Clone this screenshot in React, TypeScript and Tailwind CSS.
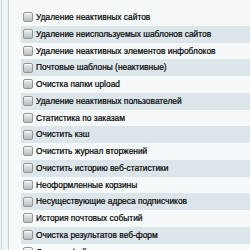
const TASKS = [
  "Удаление неактивных сайтов",
  "Удаление неиспользуемых шаблонов сайтов",
  "Удаление неактивных элементов инфоблоков",
  "Почтовые шаблоны (неактивные)",
  "Очистка папки upload",
  "Удаление неактивных пользователей",
  "Статистика по заказам",
  "Очистить кэш",
  "Очистить журнал вторжений",
  "Очистить историю веб-статистики",
  "Неоформленные корзины",
  "Несуществующие адреса подписчиков",
  "История почтовых событий",
  "Очистка результатов веб-форм",
  "Очистка файлов логов",
];

function Checkbox() {
  return (
    <span className="w-[10px] h-[10px] shrink-0 rounded-[2px] border border-[#8e9699] bg-gradient-to-b from-[#eeeeee] to-[#b9bdbf] shadow-[inset_0_1px_0_#fafafa]" />
  );
}

export default function App() {
  return (
    <div className="flex w-[250px] h-[250px] overflow-hidden bg-[#f5f9f9] font-['Liberation_Sans',Arial,sans-serif]">
      {/* left frame strip */}
      <div className="w-[9px] shrink-0 flex bg-[#eef4f5] border-r border-[#c8d2d5]">
        <div className="w-px ml-px bg-[#bcd3da]" />
      </div>

      <div className="flex-1 pl-[12px] pt-[9px]">
        {TASKS.map((label, i) => (
          <div
            key={label}
            className={`h-[16.75px] flex items-center gap-[3px] pl-[2px] ${
              i % 2 === 1 ? "bg-[#dce5e9]" : "bg-[#f5f9f9]"
            }`}
          >
            <Checkbox />
            <span className="text-[8.4px] leading-none text-black whitespace-nowrap [-webkit-text-stroke:0.2px_#000]">
              {label}
            </span>
          </div>
        ))}
      </div>
    </div>
  );
}
